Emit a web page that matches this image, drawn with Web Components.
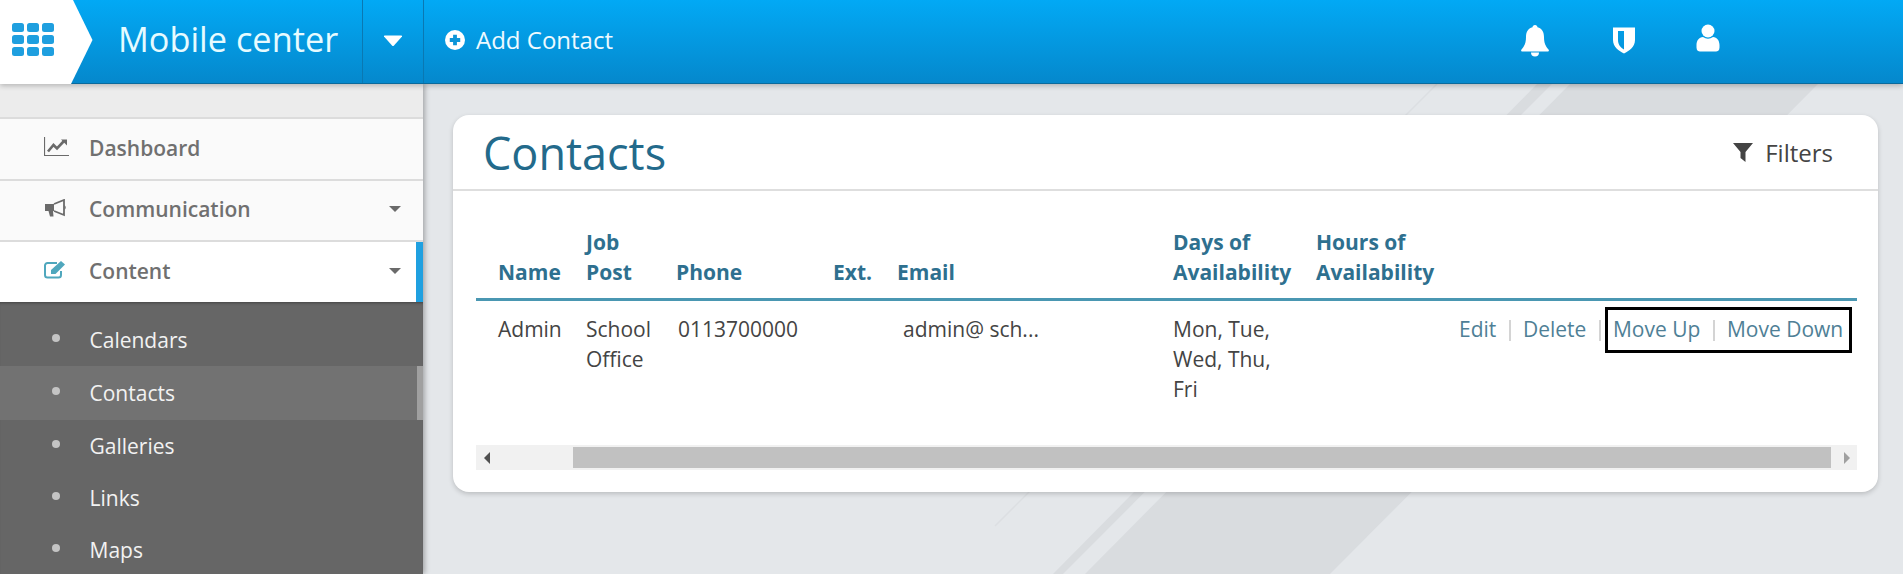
<!DOCTYPE html>
<html><head><meta charset="utf-8"><style>
html,body{margin:0;padding:0;height:100%;overflow:hidden}
body{font-family:"Open Sans","Noto Sans",sans-serif;background:#e4e7ea}
</style></head><body>
<app-shell>
<top-bar slot="top" heading="Mobile center" action="Add Contact"></top-bar>
<side-nav slot="side">
<nav-item label="Dashboard" icon="chart"></nav-item>
<nav-item label="Communication" icon="bullhorn" caret></nav-item>
<nav-item label="Content" icon="edit" caret active></nav-item>
<sub-list>
<sub-item label="Calendars"></sub-item>
<sub-item label="Contacts" current></sub-item>
<sub-item label="Galleries"></sub-item>
<sub-item label="Links"></sub-item>
<sub-item label="Maps"></sub-item>
</sub-list>
</side-nav>
<contacts-card></contacts-card>
</app-shell>
<script>
const sh=(el,html)=>{el.attachShadow({mode:'open'}).innerHTML=html};
customElements.define('app-shell',class extends HTMLElement{constructor(){super();sh(this,`<style>
:host{display:grid;grid-template-columns:423px 1fr;grid-template-rows:84px 490px;height:574px;width:1903px;overflow:hidden}
.top{grid-column:1/3;grid-row:1;z-index:3}
.side{grid-column:1;grid-row:2;z-index:2}
main{grid-column:2;grid-row:2;padding:31px 25px 0 30px;position:relative;overflow:hidden}
svg.bg{position:absolute;left:0;top:0;width:100%;height:100%}
.card{position:relative}
</style><div class="top"><slot name="top"></slot></div><div class="side"><slot name="side"></slot></div>
<main><svg class="bg" viewBox="0 0 1480 490" preserveAspectRatio="none">
<g fill="#d9dcdf">
<path d="M1147 0H1395L907 490H662z"/>
<path d="M1114 0H1129L640 490H630z"/>
</g>
<path d="M1014 0L572 442" stroke="#dcdfe2" stroke-width="1.500" fill="none"/>
</svg><div class="card"><slot></slot></div></main>`)}});
customElements.define('top-bar',class extends HTMLElement{constructor(){super();sh(this,`<style>
:host{display:block;height:84px;position:relative;color:#fff}
.bar{height:83px;display:flex;align-items:stretch;background:linear-gradient(#02a9f5,#0588cc);border-bottom:1px solid #0a6a9c;box-shadow:0 2px 5px rgba(0,0,0,.22)}
.logo{width:92px;flex:none;position:relative}
.logo svg.shape{position:absolute;left:0;top:0}
.logo svg.grid{position:absolute;left:12px;top:23px}
.title{width:271px;flex:none;box-sizing:border-box;padding:0 0 6px 26px;display:flex;align-items:center;font-size:34.300px;color:#e6fbff;border-right:1px solid #0a78b2}
.drop{width:60px;flex:none;display:flex;align-items:center;justify-content:center;border-right:1px solid #0a78b2;padding-bottom:2px}
.add{margin-left:21px;display:flex;align-items:center;gap:11px;font-size:24px;padding-bottom:5px;color:#eefaff}
.add svg{margin-top:1px}
.ic{position:absolute}
</style><div class="bar">
<div class="logo"><svg class="shape" width="93" height="84" viewBox="0 0 93 84"><path d="M0 0H73L92.500 40 71 84H0z" fill="#fff"/></svg>
<svg class="grid" width="42" height="33" viewBox="0 0 42 33" fill="#1f9fdf"><rect x="0" y="0" width="12" height="9" rx="2.500"/><rect x="15" y="0" width="12" height="9" rx="2.500"/><rect x="30" y="0" width="12" height="9" rx="2.500"/><rect x="0" y="12" width="12" height="9" rx="2.500"/><rect x="15" y="12" width="12" height="9" rx="2.500"/><rect x="30" y="12" width="12" height="9" rx="2.500"/><rect x="0" y="24" width="12" height="9" rx="2.500"/><rect x="15" y="24" width="12" height="9" rx="2.500"/><rect x="30" y="24" width="12" height="9" rx="2.500"/></svg></div>
<div class="title">${this.getAttribute('heading')}</div>
<div class="drop"><svg width="20" height="12" viewBox="0 0 20 12"><path d="M1 1.500Q.5.5 2 .5H18Q19.500 .5 19 1.500L11 10.500Q10 11.500 9 10.500z" fill="#fff"/></svg></div>
<div class="add"><svg width="20" height="20" viewBox="0 0 21 21"><circle cx="10.500" cy="10.500" r="10.500" fill="#fff"/><path d="M8.500 5h4v3.500H16v4h-3.500V16h-4v-3.500H5v-4h3.500z" fill="#0c95d8"/></svg>${this.getAttribute('action')}</div>
</div>
<svg class="ic" style="left:1520px;top:24px" width="30" height="33" viewBox="0 0 30 33" fill="#fff"><path d="M15 1c1.500 0 2.500 1 2.500 2.300C22 4.500 24 8 24 13c0 6 1.500 9 4.500 12.500 .8 1 .3 2-1 2H2.500c-1.300 0-1.800-1-1-2C4.500 22 6 19 6 13c0-5 2-8.500 6.500-9.700C12.500 2 13.500 1 15 1z"/><path d="M11 28.500h8a4 4 0 0 1-8 0z"/></svg>
<svg class="ic" style="left:1612px;top:26px" width="24" height="28" viewBox="0 0 24 28" fill="#fff"><path d="M1 1.500H23V14C23 21 17 25 12 27.500 7 25 1 21 1 14zM6 5v9c0 5 3 7.500 6 9.500V5z" fill-rule="evenodd"/></svg>
<svg class="ic" style="left:1696px;top:24px" width="24" height="29" viewBox="0 0 24 29" fill="#fff"><circle cx="12" cy="7" r="6.500"/><path d="M7 13Q12 16.500 17 13C21 13.500 23.500 16.500 23.500 21V23.500C23.500 26.500 21.500 27.500 20 27.500H4C2.500 27.500 .5 26.500 .5 23.500V21C.5 16.500 3 13.500 7 13z"/></svg>`)}});
customElements.define('side-nav',class extends HTMLElement{constructor(){super();sh(this,`<style>
:host{display:flex;flex-direction:column;height:490px;background:#ececec;box-shadow:2px 0 5px rgba(0,0,0,.28);padding-top:33px;box-sizing:border-box;overflow:hidden;width:423px}
</style><slot></slot>`)}});
const icons={
chart:'<svg width="25" height="19" viewBox="0 0 25 19"><path d="M.5 0V18.500H25" fill="none" stroke="#6a6a6a" stroke-width="1.200"/><path d="M4 14.500L9.500 8l3.500 3.500L20 4" fill="none" stroke="#6a6a6a" stroke-width="2.600"/><path d="M17 2.500h6v6z" fill="#6a6a6a"/></svg>',
bullhorn:'<svg width="22" height="18" viewBox="0 0 22 18" style="margin-left:1px"><path d="M0 5H9V12H0z" fill="#6a6a6a"/><path d="M3.500 12H8L8.500 17.500H5z" fill="#6a6a6a"/><path d="M9 5L19 1V16L9 12" fill="none" stroke="#6a6a6a" stroke-width="1.800"/><path d="M19.500 6q2.500 2.500 0 5" fill="#6a6a6a"/></svg>',
edit:'<svg width="23" height="19" viewBox="0 0 23 19"><path d="M17 11V15a2.500 2.500 0 0 1-2.500 2.500H3.500A2.500 2.500 0 0 1 1 15V5.500A2.500 2.500 0 0 1 3.500 3H13" fill="none" stroke="#4fa7bd" stroke-width="2"/><path d="M7 10L17 1l4 3.500-9.500 9.500H7z" fill="#4fa7bd"/></svg>'};
customElements.define('nav-item',class extends HTMLElement{constructor(){super();const a=this.hasAttribute('active');sh(this,`<style>
:host{display:block;flex:none;height:61.500px;box-sizing:border-box;border-top:2px solid #dcdcdc;background:${a?'#fff':'#fafafa'};position:relative}
.row{display:flex;align-items:center;height:100%;box-sizing:border-box;padding:0 0 2px 44px;color:#707070;font-size:21px;font-weight:600}
.i{width:45px;flex:none;display:flex;align-items:center;margin-bottom:2px}
.l{flex:1}
.c{width:0;height:0;border:6.500px solid transparent;border-top:6.500px solid #6a6a6a;border-bottom:0;margin-right:22px}
.bar{position:absolute;right:0;top:0;bottom:0;width:7px;background:#1fa0e0}
</style><div class="row"><span class="i">${icons[this.getAttribute('icon')]}</span><span class="l">${this.getAttribute('label')}</span>${this.hasAttribute('caret')?'<span class="c"></span>':''}</div>${a?'<div class="bar"></div>':''}`)}});
customElements.define('sub-list',class extends HTMLElement{constructor(){super();sh(this,`<style>
:host{display:block;flex:1;background:#666;padding-top:12px;box-shadow:inset 0 3px 3px -2px rgba(0,0,0,.35)}
</style><slot></slot>`)}});
customElements.define('sub-item',class extends HTMLElement{constructor(){super();const c=this.hasAttribute('current');sh(this,`<style>
:host{display:block;height:${c?54:52}px;position:relative;background:${c?'#727272':'transparent'};color:#f2f2f2;font-size:21px}
.row{display:flex;align-items:center;height:100%;padding-left:52px;gap:29.500px;box-sizing:border-box}
.d{width:8px;height:8px;border-radius:50%;background:#c4c4c4;flex:none;margin-bottom:4px}
.bar{position:absolute;right:0;top:0;bottom:0;width:6px;background:#a0a0a0}
</style><div class="row"><span class="d"></span><span>${this.getAttribute('label')}</span></div>${c?'<div class="bar"></div>':''}`)}});
customElements.define('contacts-card',class extends HTMLElement{constructor(){super();sh(this,`<style>
:host{display:block;height:377px;background:#fff;border-radius:16px;box-shadow:0 2px 5px rgba(0,0,0,.18);font-size:21px;color:#444;overflow:hidden}
header{height:74px;border-bottom:2px solid #dedede;display:flex;align-items:center;justify-content:space-between;padding:0 45px 0 30px}
h1{margin:0;font-weight:400;font-size:45px;color:#236a8b;line-height:1}
.f{display:flex;align-items:center;gap:12px;font-size:24px;color:#444}
.body{padding:0 21px 0 23px}
table{border-collapse:collapse;width:1381px;table-layout:fixed;margin-top:36px}
th{font-weight:700;color:#2e708f;text-align:left;vertical-align:bottom;padding:0 0 11px 22px;line-height:30px;font-size:21px;border-bottom:3px solid #4a97b2}
td{vertical-align:top;padding:13px 0 25px 22px;line-height:30px;position:relative;white-space:nowrap}
.acts{padding:0;color:#4f7f96}
.links{display:flex;padding:13px 0 0 165px}
.sep{width:2px;height:21px;margin:6px 12.300px 0;background:#d4d4d4;flex:none}
.box{position:absolute;left:311px;top:6px;width:247px;height:46px;border:3px solid #000;box-sizing:border-box}
.scroll{height:25px;background:#f1f1f1;margin-top:16px;width:1381px;position:relative}
.thumb{position:absolute;left:97px;right:26px;top:2px;bottom:2px;background:#c1c1c1}
.a{position:absolute;top:7px;width:0;height:0;border:6px solid transparent}
</style>
<header><h1>Contacts</h1><div class="f"><svg width="20" height="20" viewBox="0 0 20 20"><path d="M0 1H20L12.500 10V20L7.500 16V10z" fill="#444"/></svg>Filters</div></header>
<div class="body"><table><colgroup><col style="width:88px"><col style="width:90px"><col style="width:157px"><col style="width:64px"><col style="width:276px"><col style="width:143px"><col style="width:563px"></colgroup>
<thead><tr><th>Name</th><th>Job<br>Post</th><th>Phone</th><th>Ext.</th><th>Email</th><th>Days of<br>Availability</th><th>Hours of<br>Availability</th></tr></thead>
<tbody><tr><td>Admin</td><td>School<br>Office</td><td style="padding-left:24px">0113700000</td><td></td><td style="padding-left:28px">admin@ sch...</td><td>Mon, Tue,<br>Wed, Thu,<br>Fri</td><td class="acts"><div class="links"><span>Edit</span><span class="sep"></span><span>Delete</span><span class="sep"></span><span>Move Up</span><span class="sep"></span><span>Move Down</span></div><div class="box"></div></td></tr></tbody></table>
<div class="scroll"><span class="a" style="left:8px;border-right:6px solid #505050;border-left:0"></span><div class="thumb"></div><span class="a" style="right:7px;border-left:6px solid #a0a0a0;border-right:0"></span></div></div>`)}});
</script></body></html>
